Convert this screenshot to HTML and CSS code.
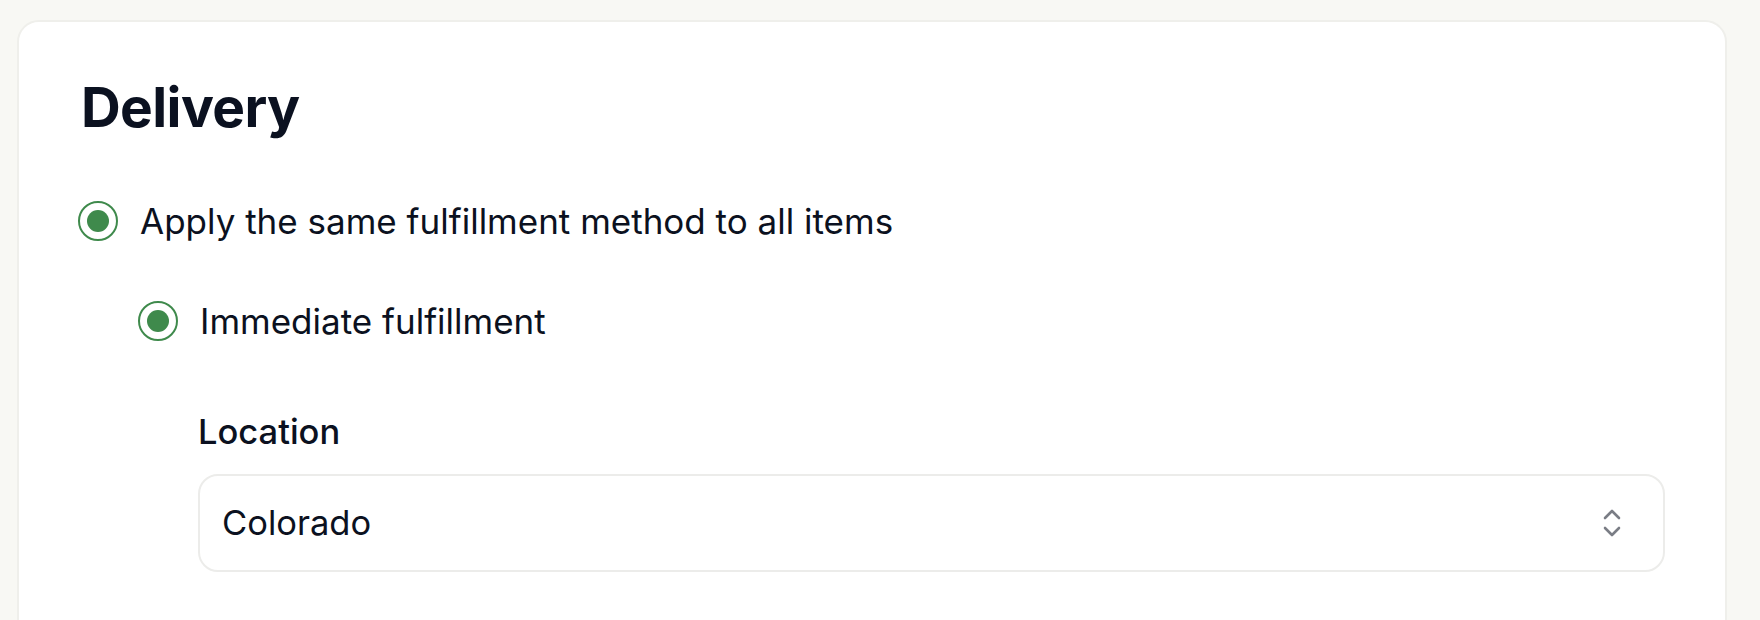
FILE: index.html
```html
<!DOCTYPE html>
<html lang="en">
<head>
<meta charset="utf-8">
<title>Delivery</title>
<link rel="stylesheet" href="styles.css">
</head>
<body>
<div class="page">
  <section class="card">
    <h1 class="title">Delivery</h1>
    <label class="option">
      <span class="radio"><span class="dot"></span></span>
      <span class="option-text">Apply the same fulfillment method to all items</span>
    </label>
    <div class="nested">
      <label class="option">
        <span class="radio"><span class="dot"></span></span>
        <span class="option-text">Immediate fulfillment</span>
      </label>
      <div class="field">
        <div class="field-label">Location</div>
        <div class="select">
          <span class="select-value">Colorado</span>
          <svg class="chevrons" width="22" height="32" viewBox="0 0 22 32" fill="none" stroke="#7a7d85" stroke-width="2.6" stroke-linecap="round" stroke-linejoin="round">
            <path d="M4 11 L11 4 L18 11"/>
            <path d="M4 21 L11 28 L18 21"/>
          </svg>
        </div>
      </div>
    </div>
  </section>
</div>
</body>
</html>
```

FILE: styles.css
```css
* { box-sizing: border-box; }
html, body { margin: 0; padding: 0; }
body {
  background: #f8f8f4;
  font-family: Inter, "Noto Sans", sans-serif;
  color: #0b1120;
}
.page {
  padding: 20px 33px 0 17px;
  height: 620px;
  overflow: hidden;
}
.card {
  background: #ffffff;
  border: 2px solid #efefeb;
  border-radius: 22px;
  padding: 49px 60px 80px 59px;
  min-height: 700px;
}
.title {
  margin: 0 0 0 3px;
  font-size: 55px;
  font-weight: 700;
  line-height: 72px;
  letter-spacing: -0.6px;
}
.option {
  display: flex;
  align-items: center;
  gap: 22px;
}
.card > .option { margin-top: 56px; }
.radio {
  width: 40px;
  height: 40px;
  border: 2.5px solid #3f8a4c;
  border-radius: 50%;
  display: flex;
  align-items: center;
  justify-content: center;
  flex: none;
}
.dot {
  width: 22px;
  height: 22px;
  border-radius: 50%;
  background: #3f8a4c;
}
.option-text {
  font-size: 35px;
  line-height: 44px;
  font-weight: 400;
}
.nested {
  padding-left: 60px;
  margin-top: 56px;
}
.field {
  padding-left: 60px;
  margin-top: 67px;
}
.field-label {
  font-size: 34.5px;
  font-weight: 500;
  line-height: 44px;
}
.select {
  margin-top: 20px;
  height: 98px;
  border: 2px solid #ececea;
  border-radius: 20px;
  display: flex;
  align-items: center;
  justify-content: space-between;
  padding: 0 40px 0 22px;
}
.select-value {
  font-size: 34.5px;
  line-height: 44px;
}
.chevrons { display: block; }
```
